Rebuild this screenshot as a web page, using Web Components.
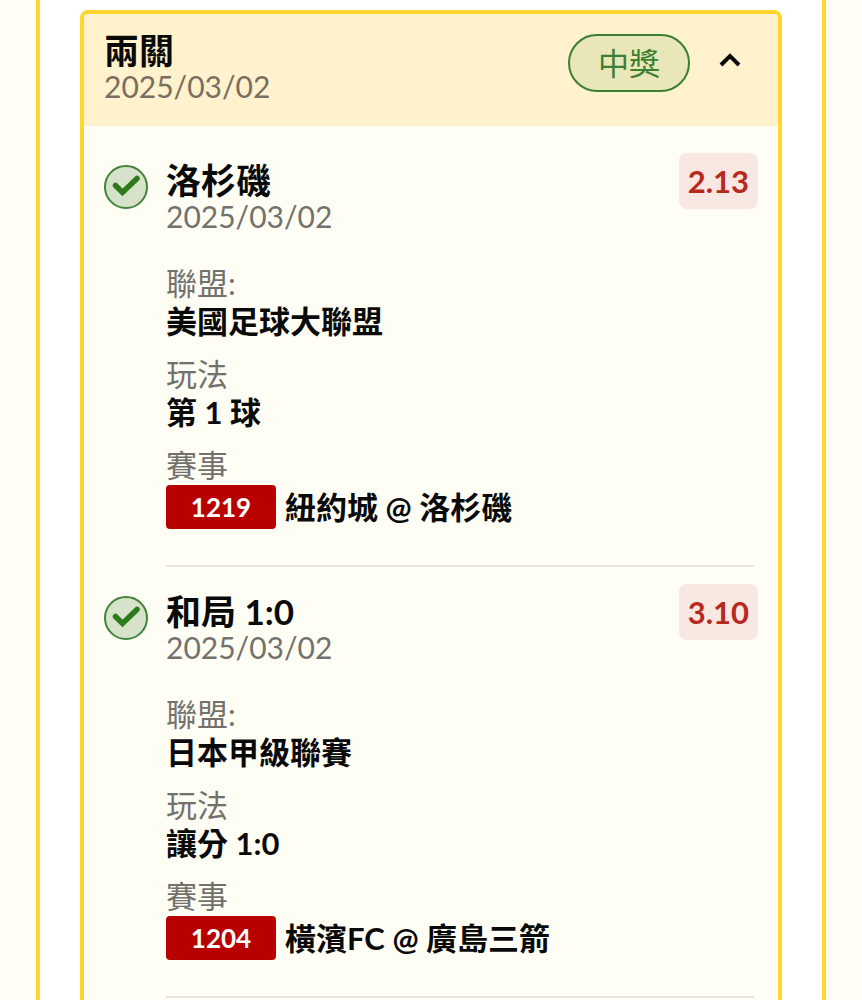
<!DOCTYPE html>
<html lang="zh-Hant">
<head>
<meta charset="utf-8">
<meta name="viewport" content="width=device-width, initial-scale=1">
<title>投注紀錄</title>
<style>
    body {
        margin: 0;
        background-color: #fffdf6;
        font-family: Lato, "Noto Sans CJK TC", sans-serif;
        font-size: 31px;
        line-height: 38px;
        color: #0a0a0a;
    }
</style>
</head>
<body>
<bet-panel>
    <bet-slip name="兩關" date="2025/03/02" status="中獎">
        <bet-leg name="洛杉磯" date="2025/03/02" odds="2.13" code="1219">
            <span slot="league">美國足球大聯盟</span>
            <span slot="play">第 1 球</span>
            <span slot="match">紐約城 @ 洛杉磯</span>
        </bet-leg>
        <bet-leg name="和局 1:0" date="2025/03/02" odds="3.10" code="1204">
            <span slot="league">日本甲級聯賽</span>
            <span slot="play">讓分 1:0</span>
            <span slot="match">橫濱FC @ 廣島三箭</span>
        </bet-leg>
    </bet-slip>
</bet-panel>

<script>
class BetPanel extends HTMLElement {
    constructor() {
        super();
        this.attachShadow({ mode: "open" });
        this.shadowRoot.innerHTML = `
            <style>
            :host {
                display: block;
                box-sizing: border-box;
                height: 100vh;
                margin: 0 36px;
                padding: 10px 40px 0;
                overflow-y: auto;
                scrollbar-width: none;
                background-color: white;
                border: solid #ffd62e;
                border-width: 0 4px;
            }
            </style>
            <slot></slot>
        `;
    }
}

class BetSlip extends HTMLElement {
    constructor() {
        super();
        this.attachShadow({ mode: "open" });
    }

    connectedCallback() {
        this.shadowRoot.innerHTML = `
            <style>
            :host {
                display: block;
                border: 4px solid #ffd62e;
                border-radius: 8px;
                background-color: #fffef5;
            }

            header {
                display: flex;
                align-items: flex-start;
                gap: 12px;
                padding: 18px 20px 21px;
                background-color: #fff2cc;
                border-radius: 4px 4px 0 0;
            }

            .heading {
                flex: 1;
            }

            h2 {
                margin: 0;
                font-size: 35px;
                font-weight: bold;
                line-height: 36px;
            }

            .date {
                display: block;
                color: #776f60;
                font-size: 30px;
                line-height: 37px;
            }

            .status {
                box-sizing: border-box;
                margin-top: 2px;
                padding: 8px 28px;
                border: 2px solid #3c7f30;
                border-radius: 29px;
                background-color: #e9e7ba;
                color: #3c7f30;
            }

            button {
                all: unset;
                display: flex;
                justify-content: center;
                align-items: center;
                width: 56px;
                height: 56px;
                cursor: pointer;
            }

            .closed svg {
                transform: rotate(180deg);
            }

            .legs {
                padding: 10px 20px 20px;
            }

            .legs[hidden] {
                display: none;
            }
            </style>
            <header>
                <div class="heading">
                    <h2>${this.getAttribute("name")}</h2>
                    <time class="date">${this.getAttribute("date")}</time>
                </div>
                <span class="status">${this.getAttribute("status")}</span>
                <button type="button" aria-label="收合" aria-expanded="true">
                    <svg width="24" height="16" viewBox="0 0 24 16" fill="none" stroke="#0a0a0a" stroke-width="4">
                        <path d="M3 13 L12 4 L21 13"/>
                    </svg>
                </button>
            </header>
            <div class="legs"><slot></slot></div>
        `;

        const button = this.shadowRoot.querySelector("button");
        const legs = this.shadowRoot.querySelector(".legs");
        button.addEventListener("click", () => {
            legs.hidden = !legs.hidden;
            button.classList.toggle("closed", legs.hidden);
            button.setAttribute("aria-expanded", String(!legs.hidden));
        });
    }
}

class BetLeg extends HTMLElement {
    constructor() {
        super();
        this.attachShadow({ mode: "open" });
    }

    connectedCallback() {
        this.shadowRoot.innerHTML = `
            <style>
            :host {
                display: flex;
                align-items: flex-start;
                gap: 18px;
                padding-top: 17px;
            }

            .won {
                flex: none;
                margin-top: 12px;
            }

            .content {
                flex: 1;
                min-width: 0;
            }

            .top {
                display: flex;
                justify-content: space-between;
                align-items: flex-start;
            }

            .heading {
                padding-top: 9px;
            }

            h3 {
                margin: 0;
                font-size: 35px;
                font-weight: bold;
                line-height: 36px;
            }

            .date {
                display: block;
                color: #73716c;
                font-size: 30px;
                line-height: 37px;
            }

            .odds {
                padding: 9px;
                border-radius: 8px;
                background-color: #f9e7e1;
                color: #b7281e;
                font-weight: bold;
            }

            dl {
                display: flex;
                flex-direction: column;
                gap: 15px;
                margin: 29px 0 36px;
            }

            dt {
                color: #73716c;
            }

            dd {
                margin: 0;
                font-weight: bold;
            }

            .match {
                display: flex;
                align-items: center;
                gap: 9px;
                padding-top: 1px;
            }

            .code {
                box-sizing: border-box;
                width: 110px;
                border-radius: 4px;
                background-color: #b80000;
                color: white;
                font-size: 26px;
                line-height: 44px;
                text-align: center;
            }

            hr {
                margin: 0 4px 0 0;
                border: 0;
                border-top: 2px solid #e8e5df;
            }
            </style>
            <svg class="won" width="44" height="44" viewBox="0 0 44 44" role="img" aria-label="中獎">
                <circle cx="22" cy="22" r="21" fill="#d7e2cb" stroke="#40823a" stroke-width="2"/>
                <path d="M11.500 20.500 L18.500 27.500 L33 13.500" fill="none" stroke="#2c7a1c" stroke-width="5.500" stroke-linecap="round"/>
            </svg>
            <div class="content">
                <div class="top">
                    <div class="heading">
                        <h3>${this.getAttribute("name")}</h3>
                        <time class="date">${this.getAttribute("date")}</time>
                    </div>
                    <span class="odds">${this.getAttribute("odds")}</span>
                </div>
                <dl>
                    <div>
                        <dt>聯盟:</dt>
                        <dd><slot name="league"></slot></dd>
                    </div>
                    <div>
                        <dt>玩法</dt>
                        <dd><slot name="play"></slot></dd>
                    </div>
                    <div>
                        <dt>賽事</dt>
                        <dd class="match">
                            <span class="code">${this.getAttribute("code")}</span>
                            <slot name="match"></slot>
                        </dd>
                    </div>
                </dl>
                <hr>
            </div>
        `;
    }
}

customElements.define("bet-panel", BetPanel);
customElements.define("bet-slip", BetSlip);
customElements.define("bet-leg", BetLeg);
</script>
</body>
</html>
